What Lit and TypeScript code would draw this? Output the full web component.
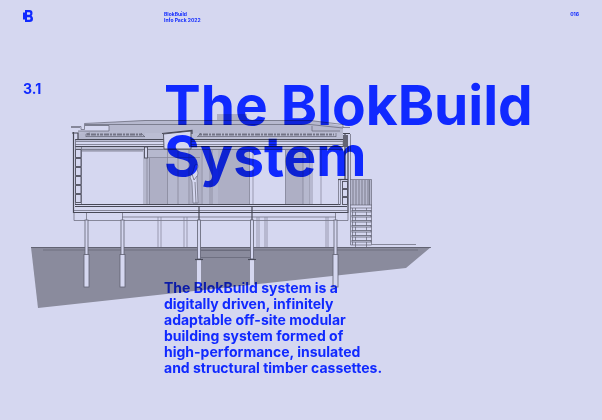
import { LitElement, html, css, svg } from "lit";
import { customElement } from "lit/decorators.js";

const range = (from: number, to: number, step: number) => {
  const out: number[] = [];
  for (let v = from; v <= to; v += step) out.push(v);
  return out;
};

@customElement("section-drawing")
class SectionDrawing extends LitElement {
  static styles = css`
    :host { display: block; }
    svg { display: block; width: 100%; height: auto; }
    .ground { fill: #a5a5a7; }
    .paper { fill: #fff; }
    .tone1 { fill: #e0e0e1; }
    .tone2 { fill: #dadadb; }
    .tone3 { fill: #d0d0d2; }
    .dark { fill: #77777b; }
    .line { fill: none; stroke: #77777c; stroke-width: 0.7; }
    .faint { fill: none; stroke: #98989d; stroke-width: 0.7; }
    .bold { fill: none; stroke: #55555b; stroke-width: 1.2; }
    .pile { fill: #fff; stroke: #74747a; stroke-width: 0.8; }
    .box { fill: #fff; stroke: #5c5c62; stroke-width: 0.9; }
    .figure { fill: #fff; stroke: #77777c; stroke-width: 0.6; }
    .grating { fill: none; stroke: #88888d; stroke-width: 2; stroke-dasharray: 3 1 5 1 2 1; }
  `;

  private pile(x: number) {
    return svg`
      <rect class="pile" x=${x - 1.5} y="220" width="3" height="35" />
      <rect class="pile" x=${x - 2.5} y="254.5" width="5" height="32.5" />
      <path class="line" d="M${x} 213V220" />`;
  }

  private cappedPile(x: number) {
    return svg`
      <rect class="paper" x=${x - 2} y="259" width="4" height="28" />
      <rect class="pile" x=${x - 1.5} y="220" width="3" height="39" />
      <path class="bold" d="M${x - 4} 259.5H${x + 4}" />
      <path class="bold" d="M${x} 207V220" />`;
  }

  render() {
    return html`
      <svg viewBox="24 104 412 212" role="img" aria-label="Section through a raised modular building">
        <path class="ground" d="M31 247H431L406 268L38 308Z" />
        <path class="bold" stroke-opacity="0.6" d="M31 247.5H431" />
        <path class="line" d="M43 250H418M372 244.5H416" />
        <path class="tone1" d="M78 131H343V151H75V139H78Z" />
        <path class="tone2" d="M85 124L145 120H310L343 126V133H145L109 131V126H85Z" />
        <path class="tone2" d="M87 131H145V139H78V135Z" />
        <rect class="tone3" x="217" y="114" width="30" height="6" />
        <path class="line" d="M71 126.500H81V129.500H84.500V123.500L145 120.500H310L343 124.500V127.500H350M85 125.500H109V131H78M312 126V131H340M71 127.500H80M85 124.500H310L343 128" />
        <rect class="paper" x="82" y="151" width="61" height="53" />
        <rect class="tone2" x="143" y="150" width="107" height="54" />
        <rect class="tone3" x="149" y="158" width="18" height="46" />
        <rect class="tone3" x="190" y="150" width="11" height="54" />
        <rect class="tone3" x="218" y="150" width="31" height="54" />
        <rect class="paper" x="250" y="150" width="89" height="54" />
        <rect class="tone3" x="285" y="150" width="18" height="54" />
        <rect class="tone2" x="303" y="150" width="7" height="54" />
        <path class="faint" d="M147 158V204M149.500 158V204M167.500 150V204M178 150V204M189 150V204M202 150V204M210 150V204M212 150V204M249.500 150V204M253 150V204M285.500 150V204M303 150V204M310 150V204M312 150V204M321 150V204M147 157.500H200" />
        <path class="grating" d="M87 134.500H143M199 134.500H334" />
        <path class="line" d="M86 137V134L90 133M145 137L141 133M197 137L201 133M336 137V133M86 136.500H145M198 136.500H336" />
        <rect class="paper" x="76" y="141" width="266" height="5" />
        <path class="bold" d="M75 139.500H343M75 146.500H343" />
        <path class="line" d="M76 141.500H343M82 149.500H343M75 144.500H343M82 151H143" />
        <path class="box" d="M163.500 134L191 131V149H164Z" />
        <path class="bold" d="M162 133.500L192 130.500V134" />
        <rect class="box" x="144.500" y="147" width="3" height="11" />
        <path class="bold" d="M73.500 132V213M74 212.500H348.500M72 133H78V139M343 133.500H350M345 134V180M348 146V213" />
        <rect class="dark" x="343" y="135" width="5" height="12" />
        <path class="line" d="M350.500 134V180M81.500 147V204M75.500 139V205" />
        ${range(149, 194, 9).map((y) => svg`<path class="box" d="M75.500 ${y + 0.5}H81V${y + 8.5}H75.500Z" />`)}
        <rect class="paper" x="75" y="206.500" width="272" height="4" />
        <path class="bold" d="M75 204.500H340M75 206.500H347" />
        <path class="line" d="M74 210.500H348" />
        <path class="line" d="M338.500 180V205M340.500 180V205" />
        <path class="bold" d="M338 179.500H348" />
        ${range(181, 197, 8).map((y) => svg`<rect class="box" x="342.500" y=${y + 0.5} width="5" height="7" />`)}
        <path class="figure" d="M195 165Q198 163 198 167L197 169L198 173L197 178L198 203H193L192 182L190 177L193 172Z" />
        <path class="line" d="M192 174L194 180L197 176M195 182L196 203" />
        <path class="line" d="M74 213V220.500H348V213M122 217H336" />
        <path class="faint" d="M158 217V247M161 217V247M184 217V247M187 217V247M257 217V247M259 217V247M265 217V247M267 217V247M326 217V247M328 217V247" />
        <path class="line" d="M201 250.500H250M201 257.500H250" />
        ${[86.5, 122.5, 335.5].map((x) => this.pile(x))}
        ${[199, 252].map((x) => this.cappedPile(x))}
        <rect class="tone2" x="351" y="180" width="20" height="25" />
        <path class="line" d="M350.500 179.500H371.500V245H350.500ZM369.500 180V205M352.500 208V245M350 205H372M350 208H372M355.500 208V247M366.500 208V247" />
        ${range(353, 368, 3).map((x) => svg`<path class="line" d="M${x} 180V205" />`)}
        ${range(210, 240, 5).map((y) => svg`<rect class="pile" x="352" y=${y + 0.5} width="19" height="1.5" />`)}
      </svg>
    `;
  }
}

@customElement("app-root")
class AppRoot extends LitElement {
  static styles = css`
    :host {
      display: block;
      position: relative;
      min-height: 100vh;
      box-sizing: border-box;
      padding: 10px 23px;
      background: #d5d7f0;
      color: #1029ff;
      font-family: Inter, "Liberation Sans", sans-serif;
      font-weight: 700;
      isolation: isolate;
    }
    header, main { display: grid; grid-template-columns: 141px 1fr auto; }
    header { font-size: 5px; line-height: 6px; height: 69px; }
    header p, h1, .lead, .number { margin: 0; }
    header p { padding-top: 1px; }
    .logo { width: 10px; height: 12px; fill: currentColor; }
    main { grid-template-columns: 141px 1fr; }
    .number { font-size: 14px; line-height: 20px; }
    h1 { padding-top: 1px; font-size: 55px; line-height: 51px; font-weight: 700; }
    .lead { grid-column: 2; margin-top: 98px; font-size: 14px; line-height: 16px; }
    section-drawing { position: absolute; left: 24px; top: 104px; width: 412px; mix-blend-mode: multiply; }
  `;

  render() {
    return html`
      <header>
        <svg class="logo" viewBox="0 0 10 12" role="img" aria-label="BlokBuild">
          <path fill-rule="evenodd" d="M2 0H6.500Q9.500 0 9.500 3Q9.500 5 8.500 5.700Q10 6.600 10 8.700Q10 12 6.500 12H2V9.500H0V2.500H2ZM4 2.300V4.800H6.300Q7.300 4.800 7.300 3.500Q7.300 2.300 6.300 2.300ZM4 7.200V9.700H6.300Q7.500 9.700 7.500 8.500Q7.500 7.200 6.300 7.200Z" />
        </svg>
        <p>BlokBuild<br />Info Pack 2022</p>
        <p>016</p>
      </header>
      <main>
        <p class="number">3.1</p>
        <h1>The BlokBuild<br />System</h1>
        <p class="lead">
          The BlokBuild system is a<br />digitally driven, infinitely<br />adaptable off-site modular<br />building
          system formed of<br />high-performance, insulated<br />and structural timber cassettes.
        </p>
      </main>
      <section-drawing></section-drawing>
    `;
  }
}
